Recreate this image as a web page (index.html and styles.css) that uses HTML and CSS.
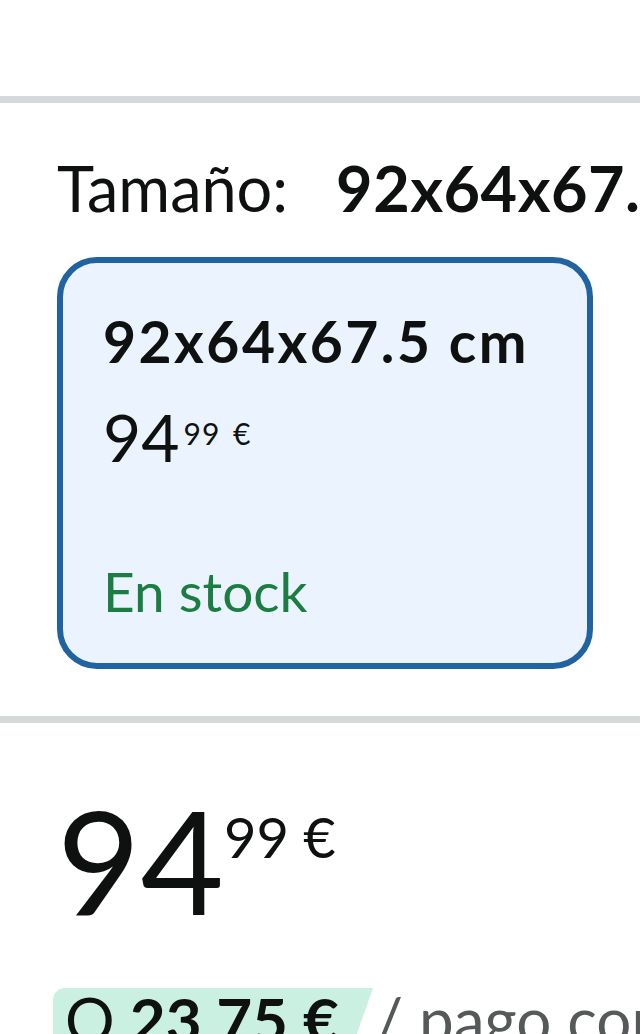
FILE: index.html
```html
<!DOCTYPE html>
<html lang="es">
<head>
    <meta charset="UTF-8">
    <meta name="viewport" content="width=device-width, initial-scale=1.0">
    <title>Tamaño y precio</title>
    <link rel="stylesheet" href="styles.css">
</head>
<body>
    <div class="page">
        <div class="divider divider-top"></div>

        <!-- Selector de tamaño -->
        <section class="size-section">
            <div class="size-label">Tamaño:<span class="size-value">92x64x67.5 cm</span></div>

            <div class="swatch swatch-selected">
                <div class="swatch-title">92x64x67.5 cm</div>
                <div class="swatch-price">
                    <span class="price-whole">94</span>
                    <span class="price-sup">99 €</span>
                </div>
                <div class="swatch-stock">En stock</div>
            </div>
        </section>

        <div class="divider divider-bottom"></div>

        <!-- Precio principal -->
        <section class="price-section">
            <div class="main-price">
                <span class="main-whole">94</span>
                <span class="main-sup">99 €</span>
            </div>
            <div class="installments">
                <span class="installment-badge"><span class="badge-or">O</span> 23,75 €</span>
                <span class="installment-text">/ pago con 4 plazos</span>
            </div>
        </section>
    </div>
</body>
</html>
```

FILE: styles.css
```css
body {
    font-family: 'Lato', 'Liberation Sans', sans-serif;
    margin: 0;
    padding: 0;
    background-color: #fff;
    color: #0f1111;
    overflow: hidden;
}
.page {
    width: 640px;
    height: 1034px;
    overflow: hidden;
    white-space: nowrap;
}
.divider {
    height: 7px;
    background-color: #d5d9d9;
}
.divider-top {
    margin-top: 96px;
}
.divider-bottom {
    margin-top: 47px;
}
.size-section {
    padding-left: 57px;
}
.size-label {
    margin-top: 47px;
    font-size: 63px;
    line-height: 76px;
}
.size-value {
    font-weight: bold;
    letter-spacing: 0.5px;
    margin-left: 48px;
}
.swatch {
    box-sizing: border-box;
    width: 536px;
    height: 412px;
    margin-top: 31px;
    padding: 44px 40px 0;
    border-radius: 40px;
}
.swatch-selected {
    border: 6px solid #2162a1;
    background-color: #ebf4fe;
}
.swatch-title {
    font-size: 57px;
    font-weight: bold;
    letter-spacing: 2.5px;
    line-height: 68px;
}
.swatch-price {
    display: flex;
    align-items: flex-start;
    margin-top: 24px;
}
.price-whole {
    font-size: 66px;
    line-height: 76px;
}
.price-sup {
    font-size: 30px;
    line-height: 30px;
    letter-spacing: 1px;
    word-spacing: 4px;
    margin-top: 19px;
    margin-left: 4px;
}
.swatch-stock {
    margin-top: 83px;
    font-size: 55px;
    line-height: 67px;
    color: #1b7d42;
}
.price-section {
    padding-left: 57px;
}
.main-price {
    display: flex;
    align-items: flex-start;
    margin-top: 62px;
}
.main-whole {
    font-size: 144px;
    line-height: 150px;
}
.main-sup {
    font-size: 56px;
    line-height: 56px;
    margin-top: 24px;
}
.installments {
    display: flex;
    align-items: flex-start;
    margin-top: 53px;
    font-size: 62px;
    line-height: 62px;
}
.installment-badge {
    font-weight: bold;
    background-color: #c9f0e1;
    margin-left: -4px;
    padding: 0 34px 0 12px;
    border-radius: 12px 0 0 0;
    clip-path: polygon(0 0, 100% 0, calc(100% - 22px) 100%, 0 100%);
}
.badge-or {
    font-weight: normal;
}
.installment-text {
    color: #565959;
    margin-left: 2px;
}
```
